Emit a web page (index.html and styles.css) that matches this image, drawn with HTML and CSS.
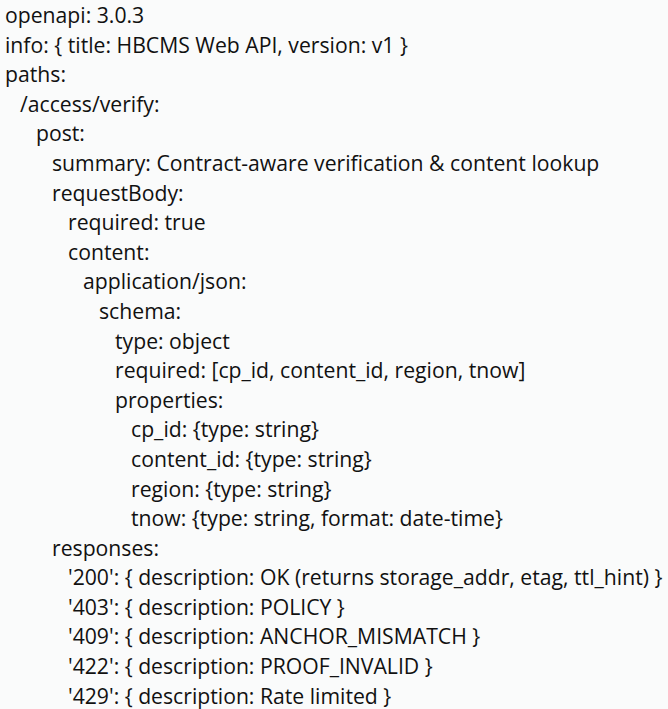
FILE: index.html
```html
<!DOCTYPE html>
<html>
<head>
<meta charset="utf-8">
<link rel="stylesheet" href="styles.css">
</head>
<body>
<div class="doc">
<div class="ln l0">openapi: 3.0.3</div>
<div class="ln l0">info: { title: HBCMS Web API, version: v1 }</div>
<div class="ln l0">paths:</div>
<div class="ln l1">/access/verify:</div>
<div class="ln l2">post:</div>
<div class="ln l3">summary: Contract-aware verification &amp; content lookup</div>
<div class="ln l3">requestBody:</div>
<div class="ln l4">required: true</div>
<div class="ln l4">content:</div>
<div class="ln l5">application/json:</div>
<div class="ln l6">schema:</div>
<div class="ln l7">type: object</div>
<div class="ln l7">required: [cp_id, content_id, region, tnow]</div>
<div class="ln l7">properties:</div>
<div class="ln l8">cp_id: {type: string}</div>
<div class="ln l8">content_id: {type: string}</div>
<div class="ln l8">region: {type: string}</div>
<div class="ln l8">tnow: {type: string, format: date-time}</div>
<div class="ln l3">responses:</div>
<div class="ln l4">'200': { description: OK (returns storage_addr, etag, ttl_hint) }</div>
<div class="ln l4">'403': { description: POLICY }</div>
<div class="ln l4">'409': { description: ANCHOR_MISMATCH }</div>
<div class="ln l4">'422': { description: PROOF_INVALID }</div>
<div class="ln l4">'429': { description: Rate limited }</div>
</div>
</body>
</html>
```
FILE: styles.css
```css
html, body {
  margin: 0;
  padding: 0;
  background: #fafbfb;
}
.doc {
  padding: 0 0 0 5px;
  font-family: "Open Sans", "Noto Sans CJK KR", sans-serif;
  font-size: 21.2px;
  line-height: 29.6px;
  color: #111111;
  white-space: nowrap;
}
.ln { }
.l0 { padding-left: 0; }
.l1 { padding-left: 15px; }
.l2 { padding-left: 31px; }
.l3 { padding-left: 47px; }
.l4 { padding-left: 63px; }
.l5 { padding-left: 78px; }
.l6 { padding-left: 94px; }
.l7 { padding-left: 110px; }
.l8 { padding-left: 126px; }
```
